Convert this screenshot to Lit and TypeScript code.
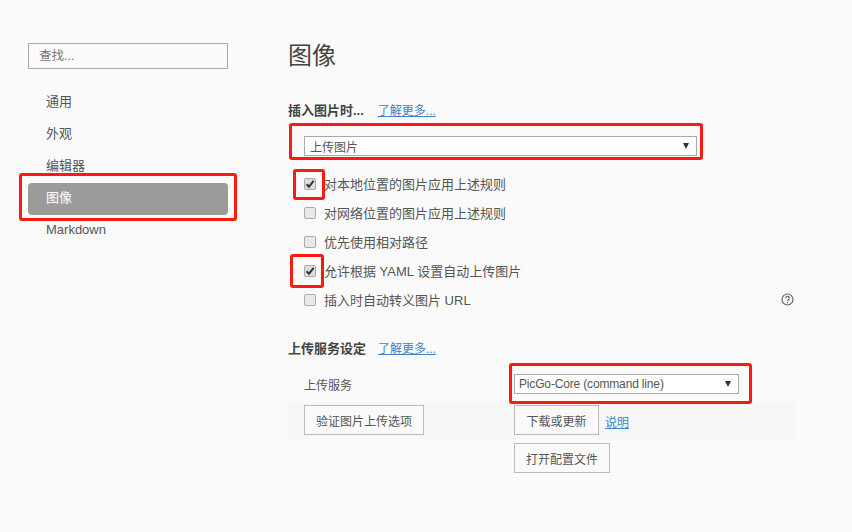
import { LitElement, html, css } from "lit";
import { customElement } from "lit/decorators.js";

@customElement("app-root")
export class AppRoot extends LitElement {
  static styles = css`
    :host { display: block; position: relative; width: 852px; height: 532px; overflow: hidden;
      background: #fafafa; color: #555; font-family: "Liberation Sans", "Noto Sans CJK SC", Arial, sans-serif; font-size: 13px; }
    * { box-sizing: border-box; }
    .page { display: flex; height: 100%; }
    .side { width: 288px; padding: 43px 0 0 28px; flex: none; }
    .search { width: 200px; height: 26px; border: 1px solid #aaa; background: #fafafa; padding-left: 10px;
      line-height: 24px; color: #777; margin-bottom: 18px; font-size: 12.5px; }
    .nav { width: 200px; height: 32px; line-height: 30px; padding-left: 18px; border-radius: 4px; color: #555; }
    .nav.on { background: #9b9b9b; color: #fff; }
    .main { width: 508px; padding-top: 41px; }
    h1 { margin: 0; font-size: 24px; font-weight: 400; line-height: 30px; color: #444; }
    .head { display: flex; align-items: center; height: 18px; margin-top: 29px; font-weight: 700; color: #444; gap: 14px; }
    .head.second { margin-top: 24px; gap: 12px; }
    a { color: #4183c4; text-decoration: underline; font-weight: 400; font-size: 12px; }
    .select { display: flex; align-items: center; justify-content: space-between; height: 20px; background: #fff;
      border: 1px solid #aaa; padding: 0 7px 0 5px; color: #555; font-size: 12px; }
    .select .arrow { width: 0; height: 0; border-left: 3.5px solid transparent; border-right: 3.5px solid transparent; border-top: 6px solid #333; }
    .latin { letter-spacing: -0.16px; margin-left: -1px; }
    .pad { padding-left: 16px; padding-right: 99px; margin-top: 18px; }
    .checks { padding-left: 16px; margin-top: 13px; }
    .check { display: flex; align-items: center; height: 29px; gap: 8px; color: #555; position: relative; }
    .box { width: 12px; height: 12px; border: 1px solid #aaa; border-radius: 2px; background: #e8e8e8; flex: none; display: flex; }
    .box.on { background: #ddd; }
    .box svg { width: 10px; height: 10px; }
    .help { position: absolute; left: 477px; top: 8px; width: 13px; height: 13px; }
    .row { display: flex; align-items: center; height: 36px; margin-top: 10px; padding-left: 16px; color: #555; font-size: 12px; }
    .col { width: 210px; flex: none; }
    .row .select { width: 225px; }
    .stripe { display: flex; align-items: flex-start; background: #f7f7f7; height: 37px; padding: 3px 0 0 16px; }
    .row2 { display: flex; padding-left: 226px; margin-top: 4px; }
    button { height: 30px; padding: 0; background: #fafafa; border: 1px solid #bbb; color: #555; font-family: inherit; font-size: 12px; display: block; }
    .b1 { width: 120px; } .b2 { width: 85px; } .b3 { width: 96px; }
    .link { margin: 8px 0 0 6px; }
    .mark { position: absolute; border: 3px solid #fb1a10; border-radius: 3px; pointer-events: none; }
    .m1 { left: 19px; top: 173px; width: 218px; height: 48px; }
    .m2 { left: 289px; top: 123px; width: 414px; height: 37px; }
    .m3 { left: 293px; top: 169px; width: 32px; height: 31px; }
    .m4 { left: 290px; top: 254px; width: 34px; height: 34px; }
    .m5 { left: 509px; top: 363px; width: 243px; height: 41px; }
  `;

  private box(on: boolean) {
    return html`<span class="box ${on ? "on" : ""}">${on
      ? html`<svg viewBox="0 0 10 10"><path d="M1.6 5.2 L4 7.8 L8.6 1.8" fill="none" stroke="#333" stroke-width="2"/></svg>`
      : ""}</span>`;
  }

  render() {
    const checks: [boolean, string][] = [
      [true, "对本地位置的图片应用上述规则"],
      [false, "对网络位置的图片应用上述规则"],
      [false, "优先使用相对路径"],
      [true, "允许根据 YAML 设置自动上传图片"],
      [false, "插入时自动转义图片 URL"],
    ];
    return html`
      <div class="page">
        <div class="side">
          <div class="search">查找...</div>
          <div class="nav">通用</div>
          <div class="nav">外观</div>
          <div class="nav">编辑器</div>
          <div class="nav on">图像</div>
          <div class="nav">Markdown</div>
        </div>
        <div class="main">
          <h1>图像</h1>
          <div class="head"><span>插入图片时...</span><a>了解更多...</a></div>
          <div class="pad"><div class="select"><span>上传图片</span><span class="arrow"></span></div></div>
          <div class="checks">
            ${checks.map(([on, t], i) => html`<div class="check">${this.box(on)}<span>${t}</span>
              ${i === 4 ? html`<svg class="help" viewBox="0 0 13 13"><circle cx="6.5" cy="6.5" r="5.5" fill="none" stroke="#666" stroke-width="1.2"/><path d="M4.7 5.2a1.8 1.8 0 1 1 2.8 1.5c-.7.4-1 .7-1 1.4" fill="none" stroke="#666" stroke-width="1.2"/><circle cx="6.5" cy="9.8" r=".8" fill="#666"/></svg>` : ""}</div>`)}
          </div>
          <div class="head second"><span>上传服务设定</span><a>了解更多...</a></div>
          <div class="row"><span class="col">上传服务</span>
            <div class="select"><span class="latin">PicGo-Core (command line)</span><span class="arrow"></span></div></div>
          <div class="stripe"><span class="col"><button class="b1">验证图片上传选项</button></span>
            <button class="b2">下载或更新</button><a class="link">说明</a></div>
          <div class="row2"><button class="b3">打开配置文件</button></div>
        </div>
      </div>
      <div class="mark m1"></div><div class="mark m2"></div><div class="mark m3"></div><div class="mark m4"></div><div class="mark m5"></div>
    `;
  }
}
